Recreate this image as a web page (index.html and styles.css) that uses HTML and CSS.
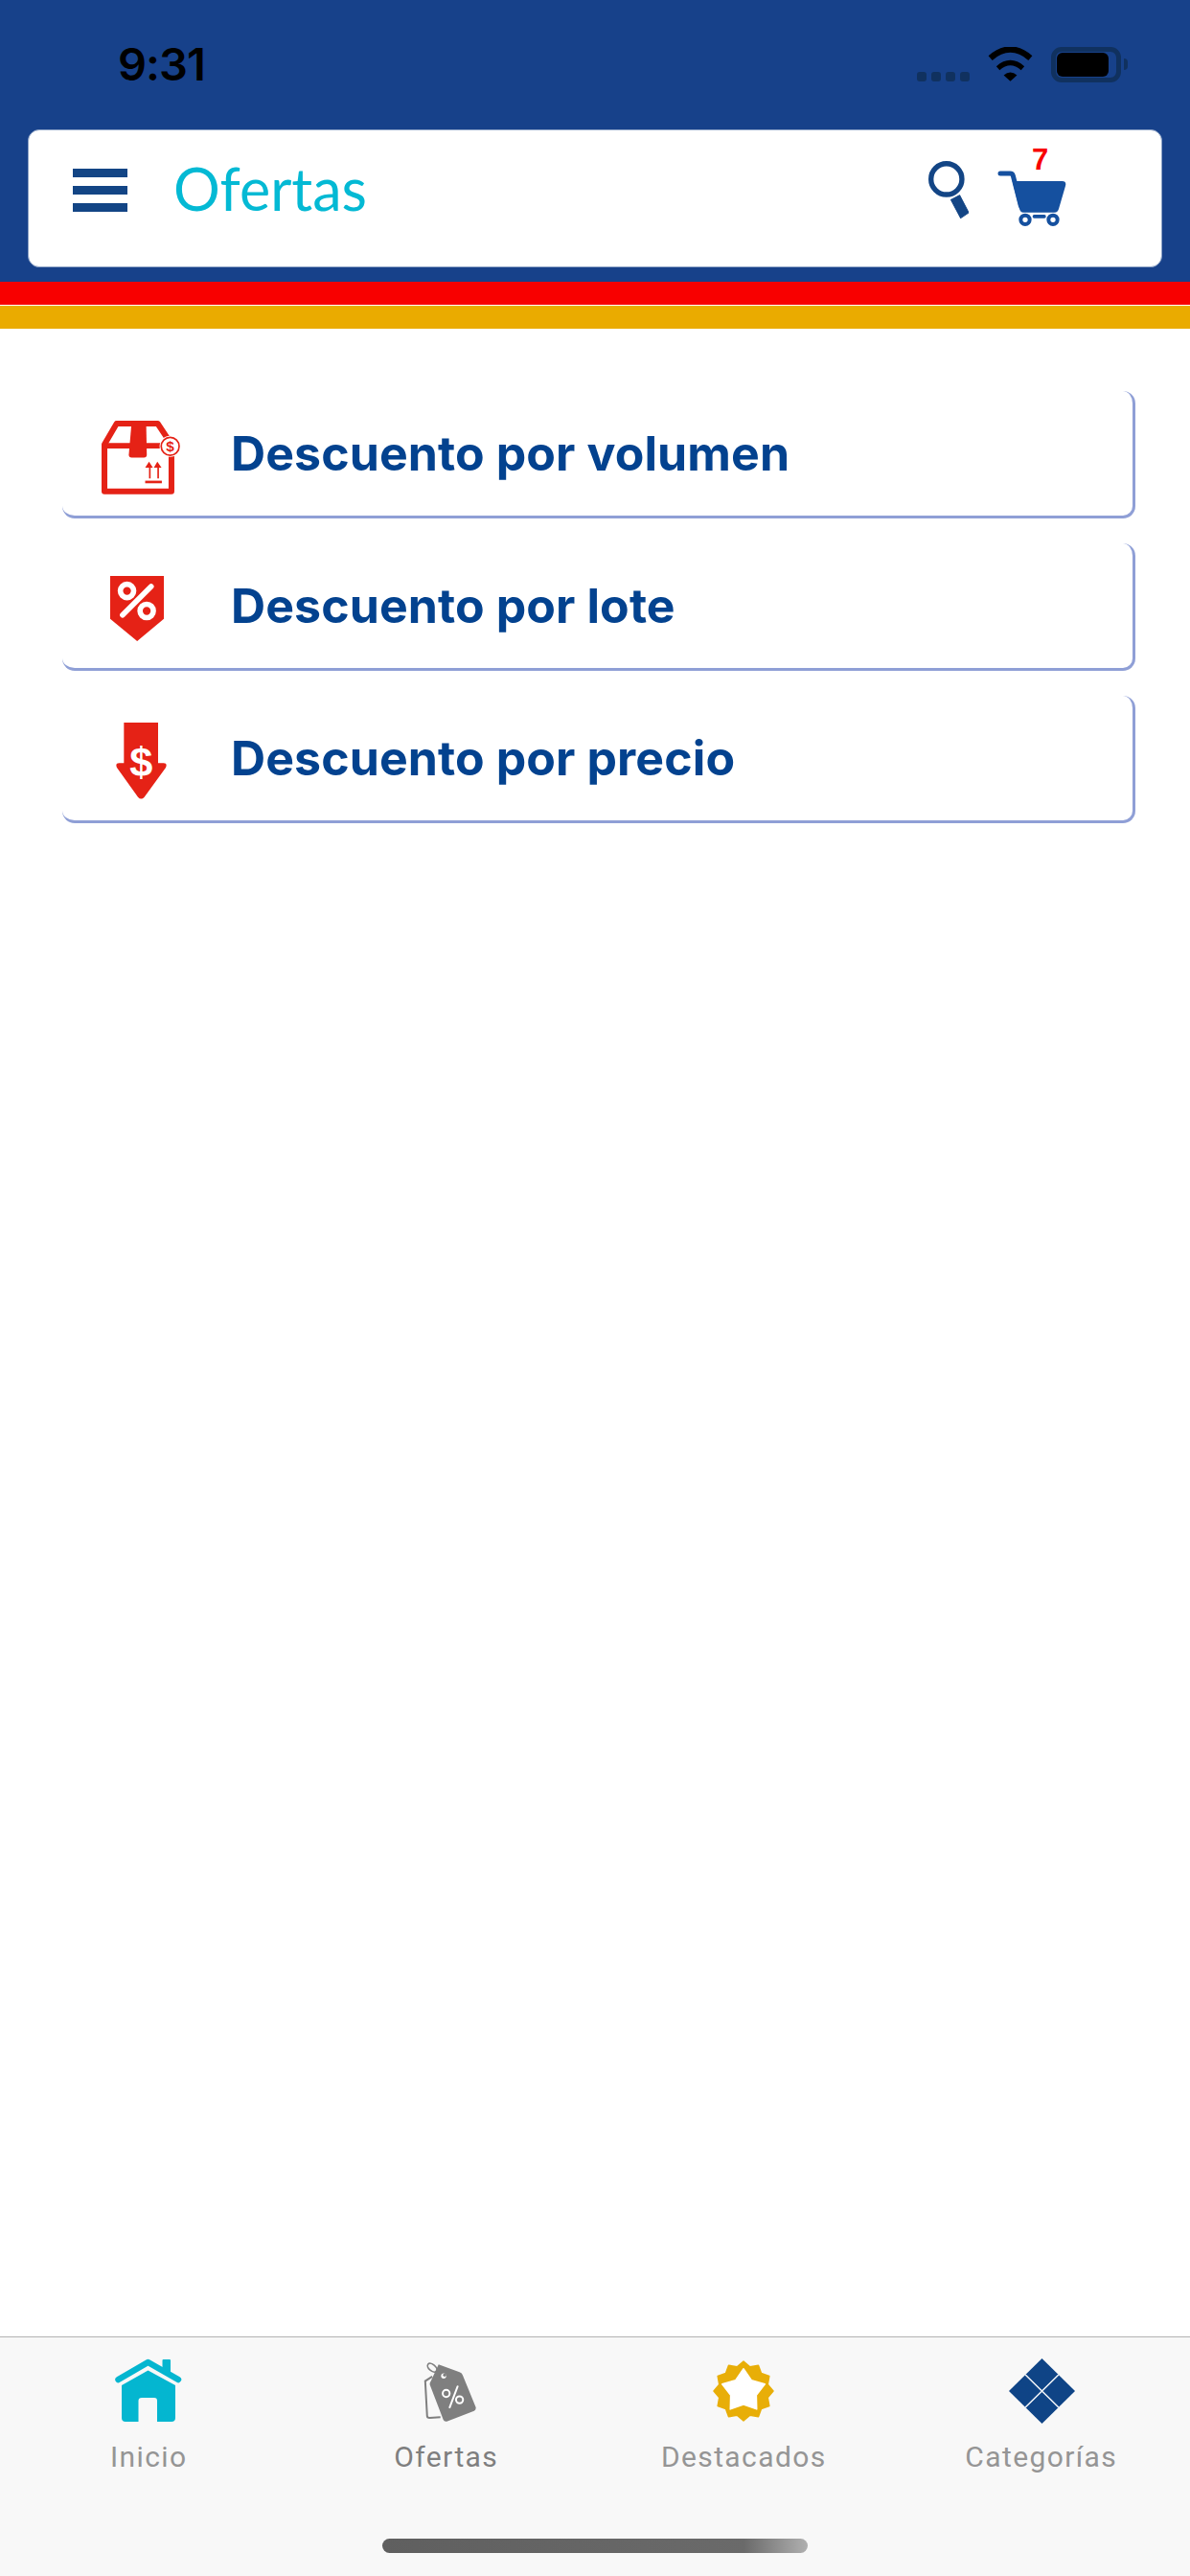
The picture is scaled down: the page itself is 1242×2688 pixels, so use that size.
FILE: index.html
```html
<!DOCTYPE html>
<html>
<head>
	<title>Ofertas</title>
	<link rel="stylesheet" href="styles.css">
</head>
<body>
	<header class="top">
		<div class="status">
			<span class="time">9:31</span>
			<div class="status-icons">
				<div class="signal"><i></i><i></i><i></i><i></i></div>
				<svg class="wifi" viewBox="305 58 142 107">
					<path d="M313 92 Q376 38 439 92" fill="none" stroke="#000" stroke-width="19"/>
					<path d="M337 124 Q376 90 415 124" fill="none" stroke="#000" stroke-width="16"/>
					<path d="M355 146 Q376 128 397 146 L376 165 Z" fill="#000"/>
				</svg>
				<div class="battery"><div class="battery-level"></div></div>
				<div class="battery-nub"></div>
			</div>
		</div>
		<div class="appbar">
			<div class="burger"><i></i><i></i><i></i></div>
			<h1 class="title">Ofertas</h1>
			<svg class="search" viewBox="198 112 125 178">
				<circle cx="254" cy="168" r="48" fill="none" stroke="#134585" stroke-width="16"/>
				<path d="M268 232 L295 218 L323 272 L298 289 Z" fill="#134585" stroke="#134585" stroke-width="3" stroke-linejoin="round"/>
			</svg>
			<div class="cart">
				<span class="cart-count">7</span>
				<svg class="cart-icon" viewBox="420 130 214 174">
					<path d="M428 139 H459 Q466 139 468 146 L492 240" fill="none" stroke="#15509f" stroke-width="15" stroke-linecap="round" stroke-linejoin="round"/>
					<path d="M466 163 H622 Q636 163 632 178 L611 250 Q608 261 598 261 H500 Q491 261 488 250 Z" fill="#15509f"/>
					<circle cx="506" cy="284" r="14" fill="#fff" stroke="#15509f" stroke-width="12"/>
					<circle cx="593" cy="284" r="14" fill="#fff" stroke="#15509f" stroke-width="12"/>
					<rect x="529" y="268" width="42" height="11" rx="5" fill="#15509f"/>
				</svg>
			</div>
		</div>
	</header>
	<div class="stripe-red"></div>
	<div class="stripe-gold"></div>

	<main class="list">
		<a class="row">
			<div class="row-icon">
				<svg class="icon-box" viewBox="197 150 245 230">
					<path d="M206 370 V224 L244 159 H372 L415 224 V370 Z" fill="none" stroke="#e52216" stroke-width="18" stroke-linejoin="round"/>
					<path d="M206 228 H415" stroke="#e52216" stroke-width="17"/>
					<path d="M291 152 H336 L338 256 Q338 265 329 265 H291 Q282 265 282 256 Z" fill="#e52216"/>
					<path d="M345 330 V296 H333 L345 278 L357 296 H350 V330 Z M371 330 V296 H360 L371 278 L384 296 H376 V330 Z" fill="#e52216"/>
					<rect x="333" y="337" width="52" height="8" fill="#e52216"/>
					<circle cx="411" cy="230" r="33" fill="#fff"/>
					<circle cx="411" cy="230" r="28" fill="none" stroke="#e52216" stroke-width="5"/>
					<text x="411" y="246" class="icon-dollar-small">$</text>
				</svg>
			</div>
			<span class="row-label">Descuento por volumen</span>
		</a>
		<a class="row">
			<div class="row-icon">
				<svg class="icon-shield" viewBox="223 635 169 205">
					<path d="M223 635 H392 V770 L308 840 L223 770 Z" fill="#e52216"/>
					<circle cx="276" cy="682" r="21" fill="#e52216" stroke="#fff" stroke-width="17"/>
					<circle cx="338" cy="745" r="21" fill="#e52216" stroke="#fff" stroke-width="17"/>
					<path d="M262 758 L352 668" stroke="#fff" stroke-width="17" stroke-linecap="round"/>
				</svg>
			</div>
			<span class="row-label">Descuento por lote</span>
		</a>
		<a class="row">
			<div class="row-icon">
				<svg class="icon-arrow" viewBox="243 1095 159 240">
					<path d="M268 1095 H375 V1222 H392 Q405 1222 399 1236 L332 1328 Q322 1339 312 1328 L246 1236 Q240 1222 253 1222 H268 Z" fill="#e52216"/>
					<text x="322" y="1264" class="icon-dollar">$</text>
				</svg>
			</div>
			<span class="row-label">Descuento por precio</span>
		</a>
	</main>

	<nav class="tabbar">
		<div class="tabs">
			<div class="tab">
				<div class="tab-icon">
					<svg class="icon-home" viewBox="0 0 70 68">
						<path d="M3.5 22 L34.5 4 L66 22" fill="none" stroke="#04b6d0" stroke-width="6.5" stroke-linecap="round" stroke-linejoin="round"/>
						<rect x="49.5" y="1" width="8.5" height="15" rx="1" fill="#04b6d0"/>
						<path d="M7 28 L34.5 12.5 L63 28 V62 Q63 66 59 66 H44 V44 Q44 41 41 41 H28 Q24.5 41 24.5 44 V66 H11 Q7 66 7 62 Z" fill="#04b6d0"/>
					</svg>
				</div>
				<span class="tab-label">Inicio</span>
			</div>
			<div class="tab">
				<div class="tab-icon">
					<svg class="icon-tag" viewBox="65 60 165 190">
						<path d="M92 108 L70 122 L76 232 Q76 238 84 238 L118 236" fill="none" stroke="#7f7f7f" stroke-width="6"/>
						<path d="M112 70 L178 94 Q186 97 188 104 L229 204 Q231 212 224 216 L138 249 Q130 251 127 244 L85 135 Q83 128 88 122 Z" fill="#7f7f7f"/>
						<ellipse cx="92" cy="80" rx="17" ry="10" transform="rotate(40 92 80)" fill="none" stroke="#7f7f7f" stroke-width="5"/>
						<circle cx="128" cy="106" r="8" fill="#fff"/>
						<circle cx="131" cy="103" r="5" fill="#7f7f7f"/>
						<circle cx="136" cy="161" r="11" fill="none" stroke="#fff" stroke-width="6"/>
						<circle cx="178" cy="181" r="11" fill="none" stroke="#fff" stroke-width="6"/>
						<path d="M172 139 L147 205" stroke="#fff" stroke-width="6" stroke-linecap="round"/>
					</svg>
				</div>
				<span class="tab-label tab-label-active">Ofertas</span>
			</div>
			<div class="tab">
				<div class="tab-icon">
					<svg class="icon-badge" viewBox="-33 -33 66 66">
						<polygon points="0,-32 7,-26.1 16,-27.7 19.1,-19.1 27.7,-16 26.1,-7 32,0 26.1,7 27.7,16 19.1,19.1 16,27.7 7,26.1 0,32 -7,26.1 -16,27.7 -19.1,19.1 -27.7,16 -26.1,7 -32,0 -26.1,-7 -27.7,-16 -19.1,-19.1 -16,-27.7 -7,-26.1" fill="#e8ae08" stroke="#e8ae08" stroke-width="1.5" stroke-linejoin="round"/>
						<polygon points="0,-24 8.5,-11.7 23,-7.5 13.8,4.5 14.2,19.5 0,14.5 -14.2,19.5 -13.8,4.5 -23,-7.5 -8.5,-11.7" fill="#fff" stroke="#fff" stroke-width="1.5" stroke-linejoin="round"/>
					</svg>
				</div>
				<span class="tab-label">Destacados</span>
			</div>
			<div class="tab">
				<div class="tab-icon">
					<svg class="icon-diamond" viewBox="0 0 69 68">
						<polygon points="34.5,0 69,34 34.5,68 0,34" fill="#0f4486"/>
						<path d="M17.2 17 L51.8 51 M51.8 17 L17.2 51" stroke="#f0f3f7" stroke-width="1.6"/>
					</svg>
				</div>
				<span class="tab-label">Categorías</span>
			</div>
		</div>
		<div class="home-indicator"></div>
	</nav>
</body>
</html>
```

FILE: styles.css
```css
* {
	box-sizing: border-box;
	margin: 0;
	padding: 0;
}

body {
	width: 1242px;
	height: 2688px;
	display: flex;
	flex-direction: column;
	background-color: #fff;
	font-family: 'Lato', sans-serif;
	overflow: hidden;
}

.top {
	background-color: #17418a;
	height: 294px;
	padding: 0 29px;
}

.status {
	height: 135px;
	display: flex;
	align-items: flex-start;
	justify-content: space-between;
	padding: 49px 0 0 94px;
}

.time {
	font-family: 'Inter', sans-serif;
	font-weight: 600;
	font-size: 47px;
	line-height: 36px;
	letter-spacing: -1px;
	color: #000;
}

.status-icons {
	display: flex;
	align-items: flex-start;
	padding-right: 36px;
}

.signal {
	display: flex;
	gap: 5px;
	margin-top: 26px;
	margin-right: 19px;
}

.signal i {
	width: 10px;
	height: 10px;
	border-radius: 3px;
	background-color: #10315f;
}

.wifi {
	width: 47px;
	height: 36px;
	margin-right: 19px;
}

.battery {
	width: 73px;
	height: 37px;
	border: 5px solid #10315f;
	border-radius: 11px;
	padding: 1px;
}

.battery-level {
	width: 54px;
	height: 100%;
	background-color: #000;
	border-radius: 6px;
}

.battery-nub {
	width: 4px;
	height: 12px;
	margin: 12px 0 0 3px;
	background-color: #10315f;
	border-radius: 0 6px 6px 0;
}

.appbar {
	height: 144px;
	background-color: #fff;
	border-radius: 12px;
	border: 1px solid #8ea3c6;
	display: flex;
	align-items: flex-start;
}

.burger {
	display: flex;
	flex-direction: column;
	gap: 9px;
	width: 57px;
	margin: 40px 0 0 46px;
}

.burger i {
	display: block;
	height: 9px;
	background-color: #134585;
}

.title {
	font-family: 'Lato', sans-serif;
	font-weight: 400;
	font-size: 61px;
	line-height: 72px;
	color: #04b9d4;
	margin: 25px 0 0 48px;
}

.search {
	width: 42px;
	height: 60px;
	margin: 32px 0 0 auto;
}

.cart {
	position: relative;
	width: 72px;
	margin: 42px 99px 0 30px;
}

.cart-icon {
	display: block;
	width: 72px;
	height: 58px;
}

.cart-count {
	position: absolute;
	top: -26px;
	left: 36px;
	font-family: 'Liberation Sans', sans-serif;
	font-weight: 700;
	font-size: 31px;
	line-height: 30px;
	color: #f80000;
}

.stripe-red {
	height: 24px;
	background-color: #f80000;
}

.stripe-gold {
	height: 24px;
	margin-top: 1px;
	background-color: #eaab00;
}

.list {
	flex: 1;
	display: flex;
	flex-direction: column;
	gap: 26px;
	padding: 65px 57px 0 65px;
}

.row {
	height: 133px;
	display: flex;
	align-items: center;
	background-color: #fff;
	border-right: 3px solid #8f9fd6;
	border-bottom: 3px solid #8f9fd6;
	border-radius: 13px;
}

.row-icon {
	width: 163px;
	margin-right: 13px;
	flex: none;
	display: flex;
	justify-content: center;
	padding-top: 6px;
}

.row-label {
	font-family: 'Inter', sans-serif;
	font-weight: 700;
	font-size: 50px;
	letter-spacing: 0.1px;
	color: #03428f;
}

.icon-box {
	width: 82px;
	height: 77px;
	margin-top: 2px;
}

.icon-shield {
	width: 56px;
	height: 68px;
	margin-right: 7px;
}

.icon-arrow {
	width: 53px;
	height: 80px;
	margin-left: 2px;
}

.icon-dollar {
	font-family: 'Liberation Sans', sans-serif;
	font-weight: 700;
	font-size: 130px;
	fill: #fff;
	text-anchor: middle;
}

.icon-dollar-small {
	font-family: 'Liberation Sans', sans-serif;
	font-weight: 700;
	font-size: 46px;
	fill: #e52216;
	text-anchor: middle;
}

.tabbar {
	height: 250px;
	flex: none;
	background-color: #f8f8f8;
	border-top: 1px solid #b2b2b2;
}

.tabs {
	display: grid;
	grid-template-columns: repeat(4, 1fr);
	height: 210px;
	padding-top: 21px;
}

.tab {
	display: flex;
	flex-direction: column;
	align-items: center;
}

.tab-icon {
	height: 70px;
	display: flex;
	align-items: center;
	justify-content: center;
}

.tab-label {
	font-family: 'Roboto', sans-serif;
	font-size: 30px;
	line-height: 36px;
	letter-spacing: 1.4px;
	margin-top: 16px;
	color: #959595;
}

.tab-label-active {
	color: #7f7f7f;
}

.icon-home {
	width: 70px;
	height: 68px;
}

.icon-tag {
	width: 55px;
	height: 63px;
	margin-left: 7px;
}

.icon-badge {
	width: 64px;
	height: 64px;
}

.icon-diamond {
	width: 69px;
	height: 68px;
	margin-left: 1px;
}

.home-indicator {
	width: 444px;
	height: 15px;
	margin-left: 399px;
	border-radius: 8px;
	background: linear-gradient(90deg, #5f5f5f 0%, #6a6a6a 85%, #b0b0b0 100%);
}
```
